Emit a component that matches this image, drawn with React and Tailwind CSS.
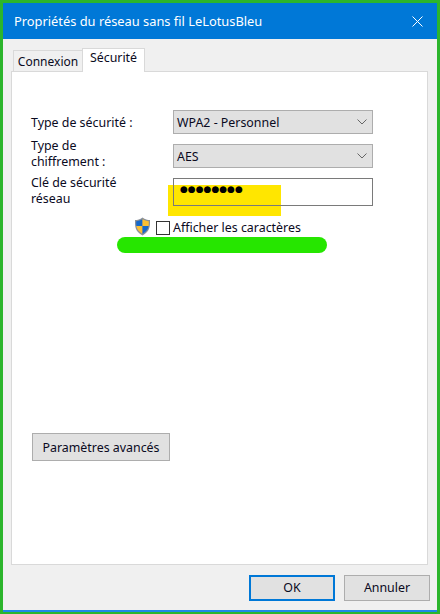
const font = { fontFamily: '"Noto Sans", "Open Sans", sans-serif' };

function Chevron() {
  return (
    <svg width="10" height="6" viewBox="0 0 10 6" fill="none" className="shrink-0">
      <path d="M0.500 0.500l4.500 4.500 4.500-4.500" stroke="#666" strokeWidth="1" />
    </svg>
  );
}

function Select({ value }) {
  return (
    <div className="flex h-[24px] w-[200px] items-center justify-between border-[1px] border-[#adadad] bg-[#e1e1e1] pl-[3px] pr-[5px] text-[12.4px] leading-none text-[#0a0a1e]">
      <span className="pt-[2px]">{value}</span>
      <Chevron />
    </div>
  );
}

function Shield() {
  return (
    <svg width="17" height="19" viewBox="0 0 17 19" className="mb-[4px] shrink-0">
      <path d="M8.5 0.5C6 2.5 3.5 3 1 3c0 6-0.5 11 7.5 15.5C16.500 14 16 9 16 3c-2.500 0-5-0.500-7.500-2.500z" fill="#8a8f98" />
      <path d="M8.500 2C6.500 3.500 4.500 4 2.200 4.200c0 1.800 0 3.300 0.200 4.800h6.100z" fill="#1668c9" />
      <path d="M8.500 2c2 1.500 4 2 6.300 2.200 0 1.800 0 3.300-0.200 4.800H8.500z" fill="#fbbf33" />
      <path d="M2.400 9h6.100v7.900C4.500 14.500 2.900 12 2.400 9z" fill="#fbbf33" />
      <path d="M14.600 9H8.500v7.900c4-2.400 5.600-4.900 6.100-7.900z" fill="#1668c9" />
    </svg>
  );
}

export default function App() {
  return (
    <div style={font} className="flex h-[614px] w-[440px] flex-col border-x-[3px] border-b-[2px] border-t-[3px] border-[#2cb52c] text-[12.4px] text-[#0a0a1e]">
      <div className="flex h-[36px] shrink-0 items-center justify-between bg-[#0078d7] pl-[11px] pr-[14px] text-[12.85px] text-white">
        <span className="pt-[2px]">Propriétés du réseau sans fil LeLotusBleu</span>
        <svg width="11" height="11" viewBox="0 0 11 11" fill="none">
          <path d="M0.500 0.500l10 10M10.500 0.500l-10 10" stroke="#fff" strokeWidth="1" />
        </svg>
      </div>

      <div className="flex min-h-0 flex-1 flex-col border-b-[2px] border-[#1e88e5] bg-[#f0f0f0] pl-[8px] pr-[9px]">
        <div className="flex h-[32px] shrink-0 items-end pl-[2px]">
          <div className="-mb-[1px] flex h-[22px] w-[70px] items-center justify-center border-x border-t border-[#d9d9d9] bg-[#f0f0f0] text-[12px] leading-none">Connexion</div>
          <div className="relative z-10 -mb-[1px] -ml-[1px] flex h-[24px] w-[63px] items-center justify-center border-x border-t border-[#d9d9d9] bg-white pb-[4px] leading-none">Sécurité</div>
        </div>

        <div className="relative flex min-h-0 flex-1 flex-col border border-[#d9d9d9] bg-white pb-[103px] pl-[19px] pt-[38px]">
          <div className="absolute left-[156px] top-[113px] h-[31px] w-[113px] bg-[#ffe600]" />
          <div className="absolute left-[105px] top-[165px] h-[16px] w-[210px] rounded-full bg-[#26e600]" />

          <div className="relative grid grid-cols-[142px_200px] gap-y-[10px]">
            <div className="flex h-[24px] items-center pt-[2px] leading-none">Type de sécurité :</div>
            <Select value="WPA2 - Personnel" />
            <div className="flex h-[24px] items-center pb-[4px] leading-[16px]">Type de<br />chiffrement :</div>
            <Select value="AES" />
            <div className="flex h-[28px] items-center pb-[2px] leading-[16px]">Clé de sécurité<br />réseau</div>
            <div style={{ fontFamily: '"DejaVu Sans", sans-serif' }} className="h-[28px] w-[200px] border border-[#7a7a7a] pl-[6px] text-[9px] leading-[21px] text-black">●●●●●●●●</div>
          </div>

          <div className="relative mt-[15px] flex h-[14px] items-center pl-[103px]">
            <Shield />
            <div className="ml-[5px] h-[14px] w-[14px] shrink-0 border border-[#333] bg-white" />
            <span className="ml-[3px] leading-none">Afficher les caractères</span>
          </div>

          <div className="ml-[1px] mt-auto flex h-[28px] w-[138px] items-center justify-center border border-[#adadad] bg-[#e1e1e1] pt-[2px] leading-none">Paramètres avancés</div>
        </div>

        <div className="flex h-[45px] shrink-0 items-center justify-end gap-[9px] pt-[1px]">
          <div className="flex h-[26px] w-[86px] items-center justify-center border-2 border-[#0078d7] bg-[#e1e1e1] leading-none">OK</div>
          <div className="-mr-[2px] flex h-[26px] w-[86px] items-center justify-center border border-[#adadad] bg-[#e1e1e1] leading-none">Annuler</div>
        </div>
      </div>
    </div>
  );
}
